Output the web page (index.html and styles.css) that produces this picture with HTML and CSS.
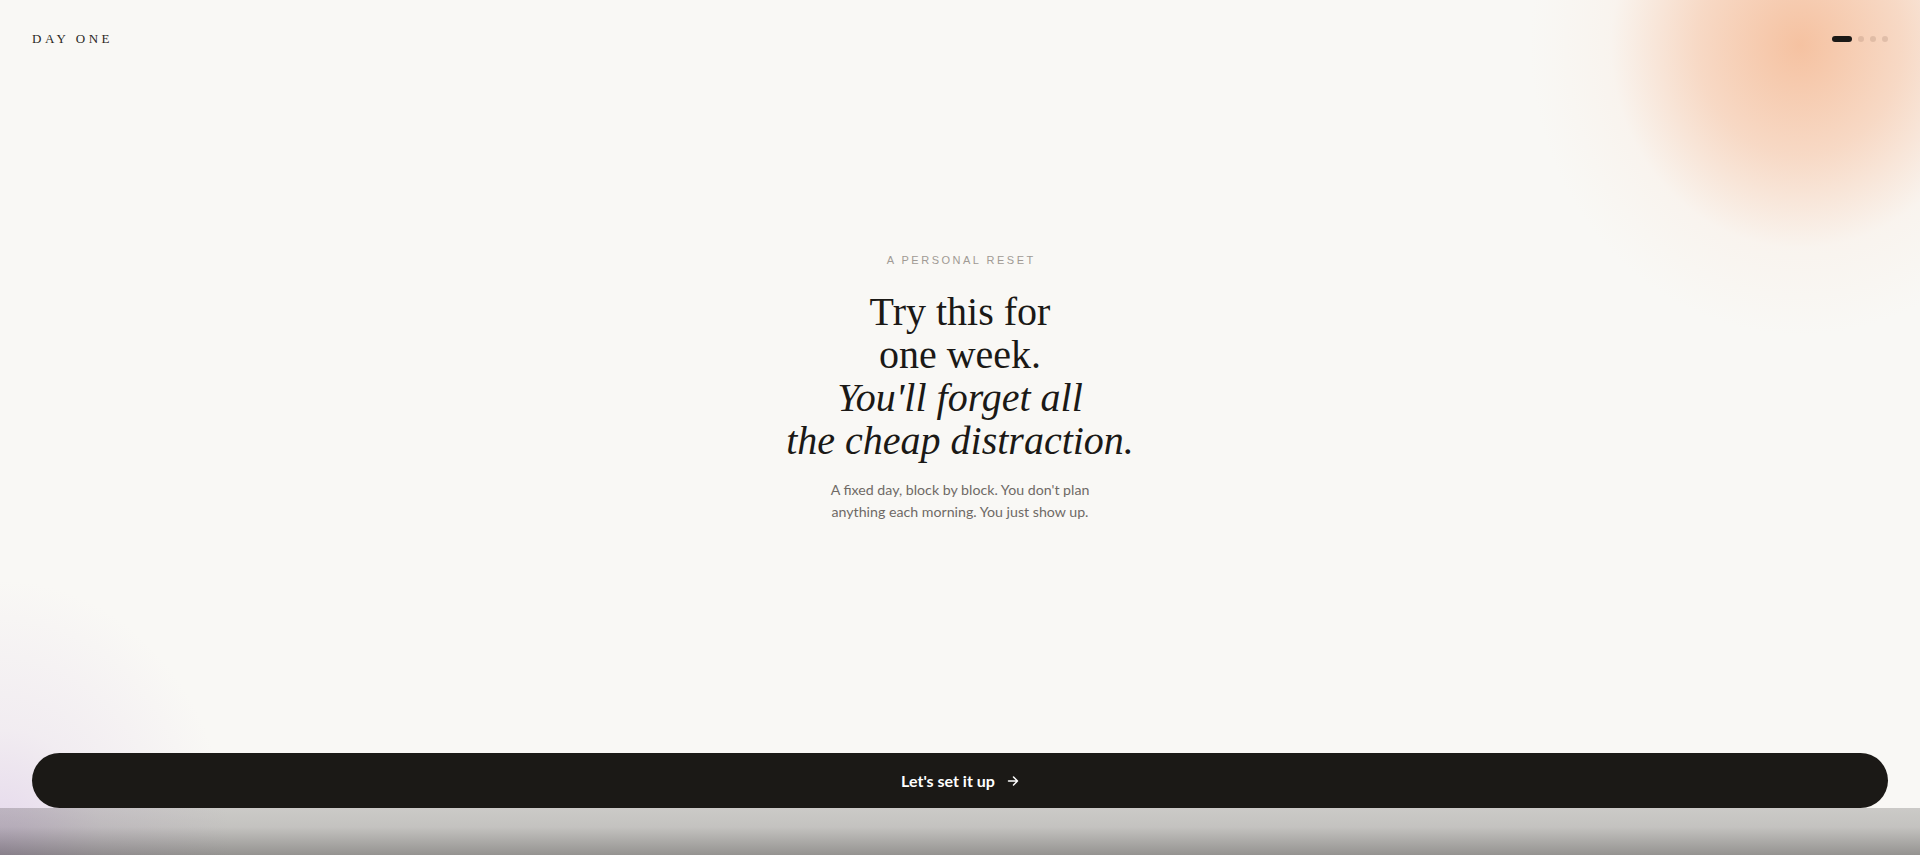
FILE: index.html
```html
<!DOCTYPE html>
<html lang="en">
<head>
<meta charset="utf-8">
<title>Day One</title>
<link rel="stylesheet" href="styles.css">
</head>
<body>
<div class="page">
  <header class="top">
    <div class="logo">DAY ONE</div>
    <div class="steps">
      <span class="step active"></span>
      <span class="step"></span>
      <span class="step"></span>
      <span class="step"></span>
    </div>
  </header>
  <main class="hero">
    <p class="eyebrow">A PERSONAL RESET</p>
    <h1 class="title">Try this for<br>one week.<br><em>You'll forget all<br>the cheap distraction.</em></h1>
    <p class="lead">A fixed day, block by block. You don't plan<br>anything each morning. You just show up.</p>
  </main>
  <footer class="bottom">
    <button class="cta" type="button">Let's set it up
      <svg class="arrow" width="12" height="12" viewBox="0 0 12 12" fill="none" stroke="currentColor" stroke-width="1.5" stroke-linecap="round" stroke-linejoin="round"><path d="M1.5 6h9M6.5 2l4 4-4 4"/></svg>
    </button>
    <div class="fade"></div>
  </footer>
</div>
</body>
</html>
```
FILE: styles.css
```css
* { box-sizing: border-box; }
html, body { margin: 0; padding: 0; height: 100%; }
body {
  background-color: #f9f8f5;
  background-image:
    radial-gradient(ellipse 270px 290px at 1800px 45px, rgba(245, 188, 152, 0.9) 0%, rgba(246, 196, 165, 0.6) 38%, rgba(249, 228, 214, 0.22) 70%, rgba(249, 248, 245, 0) 100%),
    radial-gradient(ellipse 230px 270px at 0px 850px, rgba(226, 212, 234, 0.95) 0%, rgba(232, 222, 236, 0.45) 45%, rgba(249, 248, 245, 0) 100%);
  background-repeat: no-repeat;
  font-family: "Lato", "Liberation Sans", sans-serif;
  color: #1b1916;
  overflow: hidden;
}
.page {
  height: 100vh;
  display: flex;
  flex-direction: column;
}
.top {
  display: flex;
  justify-content: space-between;
  align-items: center;
  padding: 32px 32px 0;
  height: 45px;
}
.logo {
  font-family: "Liberation Serif", serif;
  font-size: 13px;
  letter-spacing: 0.27em;
  color: #2a2724;
  line-height: 13px;
}
.steps {
  display: flex;
  gap: 6px;
  align-items: center;
}
.step {
  width: 6px;
  height: 6px;
  border-radius: 3px;
  background: rgba(120, 90, 70, 0.18);
}
.step.active {
  width: 20px;
  background: #1b1916;
}
.hero {
  flex: 1;
  display: flex;
  flex-direction: column;
  align-items: center;
  padding-top: 207px;
  text-align: center;
}
.eyebrow {
  margin: 0;
  font-family: "Liberation Sans", sans-serif;
  font-size: 11px;
  line-height: 16px;
  letter-spacing: 2.5px;
  color: #a09a94;
  padding-left: 2.5px;
}
.title {
  margin: 22px 0 0;
  font-family: "Liberation Serif", serif;
  font-weight: 400;
  font-size: 40px;
  line-height: 43px;
  color: #1b1916;
}
.title em {
  font-style: italic;
}
.lead {
  margin: 17px 0 0;
  font-size: 14.2px;
  line-height: 21.5px;
  color: #6f6a66;
}
.bottom {
  display: flex;
  flex-direction: column;
}
.cta {
  margin: 0 32px;
  height: 55px;
  border: 0;
  border-radius: 28px;
  background: #1b1916;
  color: #ffffff;
  font-family: "Lato", "Liberation Sans", sans-serif;
  font-weight: 700;
  font-size: 16px;
  display: flex;
  align-items: center;
  justify-content: center;
  gap: 12px;
  cursor: pointer;
}
.arrow { display: block; }
.fade {
  height: 47px;
  background: linear-gradient(to bottom, rgba(20, 18, 16, 0.2) 0%, rgba(20, 18, 16, 0.23) 40%, rgba(20, 18, 16, 0.44) 100%);
}
```
